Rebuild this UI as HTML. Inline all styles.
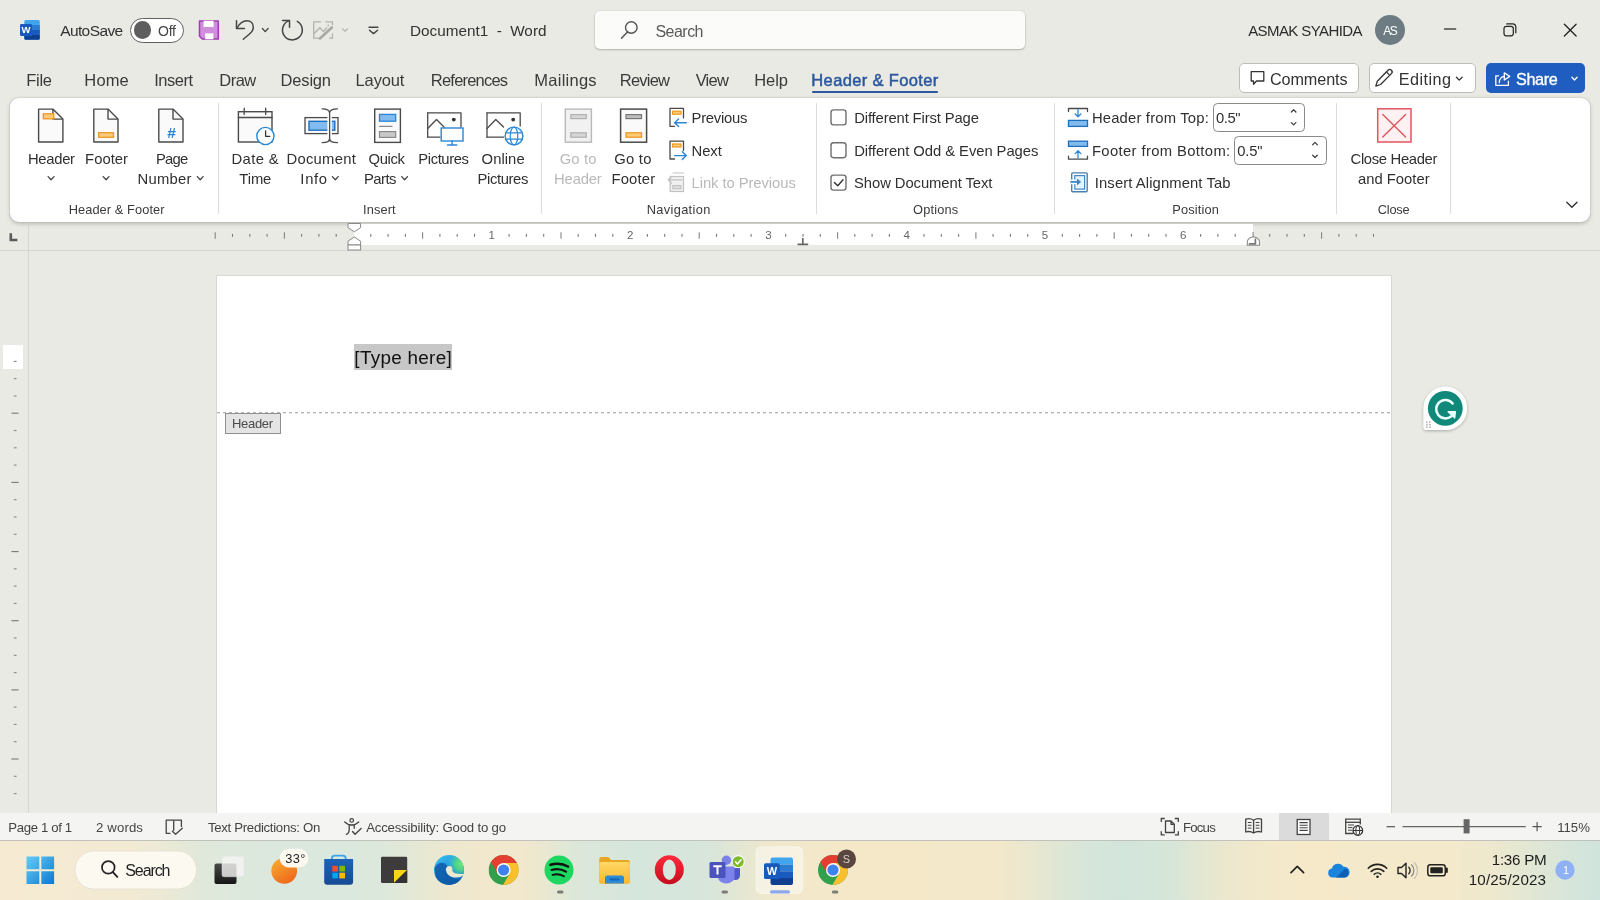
<!DOCTYPE html>
<html><head><meta charset="utf-8"><title>Document1 - Word</title>
<style>
html,body{margin:0;padding:0;}
body{width:1600px;height:900px;overflow:hidden;background:#EAEAE4;font-family:"Liberation Sans",sans-serif;position:relative;}
#root{position:absolute;left:0;top:0;width:1600px;height:900px;will-change:transform;}
.a{position:absolute;box-sizing:border-box;}
.t{position:absolute;white-space:pre;line-height:20px;}
svg{overflow:visible;}
</style></head><body><div id="root">
<svg class="a" style="left:20px;top:20px;" width="21" height="20" viewBox="0 0 21 20">
<rect x="4.300" y="0" width="15.500" height="19.800" rx="1.500" fill="#41A5EE"/>
<rect x="4.300" y="5" width="15.500" height="5" fill="#2B7CD3"/>
<rect x="4.300" y="10" width="15.500" height="5" fill="#185ABD"/>
<path d="M4.300 15h15.500v3.300a1.500 1.500 0 0 1-1.500 1.500h-12.500a1.500 1.500 0 0 1-1.500-1.500z" fill="#103F91"/>
<rect x="0" y="4" width="12" height="12" rx="1.200" fill="#185ABD"/>
<text x="6" y="13.400" font-family="Liberation Sans,sans-serif" font-weight="bold" font-size="9.500" fill="#fff" text-anchor="middle">W</text>
</svg>
<span class="t" style="left:60.17px;top:21.00px;font-size:15.5px;letter-spacing:-0.600px;color:#333;">AutoSave</span>
<div class="a" style="left:130.2px;top:17.5px;width:53.60000000000002px;height:25.4px;background:#fff;border:1.4px solid #606060;border-radius:14px;"></div>
<div class="a" style="left:133.6px;top:21px;width:17.599999999999994px;height:17.6px;background:#5e5e5e;border-radius:50%;"></div>
<span class="t" style="left:158.04px;top:21.00px;font-size:14px;letter-spacing:-0.247px;color:#444;">Off</span>
<svg class="a" style="left:0px;top:0px;" width="400" height="60" viewBox="0 0 400 60">
<path d="M199.500 21H218.300V39H202.300L199.500 36.200Z" fill="#D08EDD" stroke="#9E3DB2" stroke-width="1.500" stroke-linejoin="round"/>
<rect x="203.600" y="20.800" width="10" height="6.200" fill="#fff"/>
<rect x="205.200" y="33.400" width="8.200" height="5.800" fill="#fff"/>
<path d="M236.500 20.800V28.600H244.400" fill="none" stroke="#444" stroke-width="1.500" stroke-linecap="round" stroke-linejoin="round"/>
<path d="M236.800 28.300C239.500 23.500 243 20.800 246.900 20.800C250.800 20.800 253.300 23.500 253.300 27.300C253.300 30 252 32 249.500 34L243.300 39.200" fill="none" stroke="#444" stroke-width="1.500" stroke-linecap="round" stroke-linejoin="round"/>
<path d="M282.500 20.500H289.500V27.300" fill="none" stroke="#444" stroke-width="1.500" stroke-linecap="round" stroke-linejoin="round"/>
<path d="M297.300 21.400A9.900 9.900 0 1 1 289.300 20.600" fill="none" stroke="#444" stroke-width="1.500" stroke-linecap="round"/>
<path d="M321 21.800H313.700V38.200H321M325.500 21.800H332.500V25M332.500 33.500V38.200H329" fill="none" stroke="#b3b3ad" stroke-width="1.300"/>
<path d="M314 33.800L319.800 27.800L323.500 31.500L327 27.500" fill="none" stroke="#b3b3ad" stroke-width="1.300"/>
<circle cx="328.300" cy="25.300" r="0.900" fill="#b3b3ad"/>
<path d="M331.800 27.500L320 38.500" stroke="#a9a9a3" stroke-width="2.600" stroke-linecap="round"/>
<path d="M369 27.300H377.900" stroke="#444" stroke-width="1.400" stroke-linecap="round"/>
<path d="M369.500 30.200L373.500 33.600L377.600 30.200" fill="none" stroke="#444" stroke-width="1.400" stroke-linecap="round" stroke-linejoin="round"/>
</svg>
<svg class="a" style="left:0;top:0" width="1600" height="900"><path d="M262.4 28.5 L265.25 31.6 L268.1 28.5" fill="none" stroke="#444" stroke-width="1.3" stroke-linecap="round" stroke-linejoin="round"/></svg>
<svg class="a" style="left:0;top:0" width="1600" height="900"><path d="M342.4 28.8 L345.0 31.3 L347.6 28.8" fill="none" stroke="#b8b8b2" stroke-width="1.2" stroke-linecap="round" stroke-linejoin="round"/></svg>
<span class="t" style="left:409.95px;top:21.00px;font-size:15.3px;letter-spacing:-0.003px;color:#333;">Document1  -  Word</span>
<div class="a" style="left:595px;top:11px;width:430px;height:38px;background:#FBFBFA;border-radius:5px;box-shadow:0 1px 2px rgba(0,0,0,0.22),0 0 0 1px rgba(0,0,0,0.04);"></div>
<svg class="a" style="left:620px;top:20px;" width="20" height="20" viewBox="0 0 20 20">
<circle cx="11.300" cy="7.500" r="5.800" fill="none" stroke="#555" stroke-width="1.4"/>
<path d="M7.500 12l-6 6.300" stroke="#555" stroke-width="1.5" stroke-linecap="round"/>
</svg>
<span class="t" style="left:655.48px;top:22.00px;font-size:16px;letter-spacing:-0.531px;color:#5a5a5a;">Search</span>
<span class="t" style="left:1248.17px;top:21.00px;font-size:15px;letter-spacing:-0.588px;color:#2b2b2b;">ASMAK SYAHIDA</span>
<div class="a" style="left:1375px;top:15px;width:30px;height:30px;background:#6C7C82;border-radius:50%;"></div>
<span class="t" style="left:1383.28px;top:21.00px;font-size:12px;letter-spacing:-1.552px;color:#fff;">AS</span>
<svg class="a" style="left:1440px;top:18px;" width="145" height="24" viewBox="0 0 145 24">
<path d="M4 11h12.200" stroke="#222" stroke-width="1.200"/>
<rect x="64" y="8.300" width="9.300" height="9.500" rx="2.200" fill="none" stroke="#222" stroke-width="1.200"/>
<path d="M66.300 5.800h6.300a3.200 3.200 0 0 1 3.200 3.200v6.300" fill="none" stroke="#222" stroke-width="1.200"/>
<path d="M124.400 6.300l11.700 11.700M136.100 6.300l-11.700 11.700" stroke="#222" stroke-width="1.300" stroke-linecap="round"/>
</svg>
<span class="t" style="left:26.35px;top:70.00px;font-size:16.5px;letter-spacing:-0.321px;color:#3a3a3a;">File</span>
<span class="t" style="left:84.35px;top:70.00px;font-size:16.5px;letter-spacing:0.122px;color:#3a3a3a;">Home</span>
<span class="t" style="left:154.18px;top:70.00px;font-size:16.5px;letter-spacing:-0.470px;color:#3a3a3a;">Insert</span>
<span class="t" style="left:219.35px;top:70.00px;font-size:16.5px;letter-spacing:-0.553px;color:#3a3a3a;">Draw</span>
<span class="t" style="left:280.60px;top:70.00px;font-size:16.5px;letter-spacing:-0.183px;color:#3a3a3a;">Design</span>
<span class="t" style="left:355.60px;top:70.00px;font-size:16.5px;letter-spacing:-0.156px;color:#3a3a3a;">Layout</span>
<span class="t" style="left:430.85px;top:70.00px;font-size:16.5px;letter-spacing:-0.794px;color:#3a3a3a;">References</span>
<span class="t" style="left:534.35px;top:70.00px;font-size:16.5px;letter-spacing:0.245px;color:#3a3a3a;">Mailings</span>
<span class="t" style="left:619.85px;top:70.00px;font-size:16.5px;letter-spacing:-0.801px;color:#3a3a3a;">Review</span>
<span class="t" style="left:695.63px;top:70.00px;font-size:16.5px;letter-spacing:-0.716px;color:#3a3a3a;">View</span>
<span class="t" style="left:754.35px;top:70.00px;font-size:16.5px;letter-spacing:-0.135px;color:#3a3a3a;">Help</span>
<span class="t" style="left:811.35px;top:70.00px;font-size:16.5px;letter-spacing:0.352px;color:#2A579E;-webkit-text-stroke:0.5px #2A579E;">Header &amp; Footer</span>
<div class="a" style="left:812px;top:91.1px;width:126px;height:2.1000000000000085px;background:#2A579E;border-radius:1px;"></div>
<div class="a" style="left:1239px;top:63.2px;width:119.5px;height:29.799999999999997px;background:#fff;border:1px solid #bcbcb8;border-radius:5px;"></div>
<svg class="a" style="left:1250px;top:70px;" width="16" height="16" viewBox="0 0 16 16"><path d="M1.200 1.700h12.600v9.300h-7.300l-3 3.300v-3.300h-2.300z" fill="none" stroke="#333" stroke-width="1.300" stroke-linejoin="round"/></svg>
<span class="t" style="left:1269.89px;top:69.00px;font-size:16.2px;letter-spacing:-0.082px;color:#333;">Comments</span>
<div class="a" style="left:1369px;top:63.2px;width:106.5px;height:29.799999999999997px;background:#fff;border:1px solid #bcbcb8;border-radius:5px;"></div>
<svg class="a" style="left:1374px;top:68px;" width="20" height="20" viewBox="0 0 20 20"><path d="M14 2.200a2.300 2.300 0 0 1 3.400 3.400l-10.800 10.900l-4.800 1.600l1.500-4.900z" fill="none" stroke="#333" stroke-width="1.300" stroke-linejoin="round"/><path d="M12.500 4l3.300 3.300" stroke="#333" stroke-width="1.200"/></svg>
<span class="t" style="left:1398.87px;top:69.00px;font-size:16.2px;letter-spacing:0.445px;color:#333;">Editing</span>
<svg class="a" style="left:0;top:0" width="1600" height="900"><path d="M1456.4 77.2 L1459.25 80.1 L1462.1 77.2" fill="none" stroke="#333" stroke-width="1.3" stroke-linecap="round" stroke-linejoin="round"/></svg>
<div class="a" style="left:1486px;top:63.2px;width:99px;height:29.799999999999997px;background:#1F5EC0;border-radius:5px;"></div>
<svg class="a" style="left:0px;top:0px;" width="1600" height="100" viewBox="0 0 1600 100">
<path d="M1498.600 75.800H1495.800V85.300H1508.400V81.200" fill="none" stroke="#fff" stroke-width="1.300" stroke-linejoin="round" stroke-linecap="round"/>
<path d="M1499.200 82.600C1499.600 78.600 1501.400 76.500 1504.300 76.300" fill="none" stroke="#fff" stroke-width="1.300" stroke-linecap="round"/>
<path d="M1504.300 72.800L1509.700 76.400L1504.300 80Z" fill="none" stroke="#fff" stroke-width="1.300" stroke-linejoin="round"/>
</svg>
<span class="t" style="left:1515.97px;top:69.00px;font-size:16.2px;letter-spacing:-0.365px;color:#fff;-webkit-text-stroke:0.35px #fff;">Share</span>
<svg class="a" style="left:0;top:0" width="1600" height="900"><path d="M1571.9 77.2 L1574.5 80.0 L1577.1 77.2" fill="none" stroke="#fff" stroke-width="1.3" stroke-linecap="round" stroke-linejoin="round"/></svg>
<div class="a" style="left:10px;top:97.5px;width:1580px;height:124.0px;background:#fff;border-radius:9px;box-shadow:0 1.5px 4px rgba(0,0,0,0.20),0 0 2px rgba(0,0,0,0.14);"></div>
<div class="a" style="left:218.0px;top:102.5px;width:1.0px;height:111.19999999999999px;background:#dcdcdc;"></div>
<div class="a" style="left:541.3px;top:102.5px;width:1.0px;height:111.19999999999999px;background:#dcdcdc;"></div>
<div class="a" style="left:815.7px;top:102.5px;width:1.0px;height:111.19999999999999px;background:#dcdcdc;"></div>
<div class="a" style="left:1053.7px;top:102.5px;width:1.0px;height:111.19999999999999px;background:#dcdcdc;"></div>
<div class="a" style="left:1336.2px;top:102.5px;width:1.0px;height:111.19999999999999px;background:#dcdcdc;"></div>
<div class="a" style="left:1450.0px;top:102.5px;width:1.0px;height:111.19999999999999px;background:#dcdcdc;"></div>
<span class="t" style="left:27.99px;top:149.00px;font-size:14.8px;letter-spacing:-0.306px;color:#303030;">Header</span>
<svg class="a" style="left:0;top:0" width="1600" height="900"><path d="M48.15 176.6 L51.075 179.8 L54.0 176.6" fill="none" stroke="#444" stroke-width="1.3" stroke-linecap="round" stroke-linejoin="round"/></svg>
<span class="t" style="left:85.09px;top:149.00px;font-size:14.8px;letter-spacing:0.027px;color:#303030;">Footer</span>
<svg class="a" style="left:0;top:0" width="1600" height="900"><path d="M103.15 176.6 L106.075 179.8 L109.0 176.6" fill="none" stroke="#444" stroke-width="1.3" stroke-linecap="round" stroke-linejoin="round"/></svg>
<span class="t" style="left:155.99px;top:149.00px;font-size:14.8px;letter-spacing:-0.798px;color:#303030;">Page</span>
<span class="t" style="left:137.59px;top:169.00px;font-size:14.8px;letter-spacing:0.252px;color:#303030;">Number</span>
<svg class="a" style="left:0;top:0" width="1600" height="900"><path d="M197.3 176.6 L200.2 179.8 L203.1 176.6" fill="none" stroke="#444" stroke-width="1.3" stroke-linecap="round" stroke-linejoin="round"/></svg>
<span class="t" style="left:68.65px;top:200.00px;font-size:12.8px;letter-spacing:0.096px;color:#3a3a3a;">Header &amp; Footer</span>
<span class="t" style="left:231.49px;top:149.00px;font-size:14.8px;letter-spacing:0.377px;color:#303030;">Date &amp;</span>
<span class="t" style="left:239.37px;top:169.00px;font-size:14.8px;letter-spacing:-0.122px;color:#303030;">Time</span>
<span class="t" style="left:286.49px;top:149.00px;font-size:14.8px;letter-spacing:0.266px;color:#303030;">Document</span>
<span class="t" style="left:300.34px;top:169.00px;font-size:14.8px;letter-spacing:0.694px;color:#303030;">Info</span>
<svg class="a" style="left:0;top:0" width="1600" height="900"><path d="M332.4 176.6 L335.3 179.8 L338.20000000000005 176.6" fill="none" stroke="#444" stroke-width="1.3" stroke-linecap="round" stroke-linejoin="round"/></svg>
<span class="t" style="left:368.50px;top:149.00px;font-size:14.8px;letter-spacing:-0.341px;color:#303030;">Quick</span>
<span class="t" style="left:363.99px;top:169.00px;font-size:14.8px;letter-spacing:-0.500px;color:#303030;">Parts</span>
<svg class="a" style="left:0;top:0" width="1600" height="900"><path d="M401.7 176.6 L404.6 179.8 L407.5 176.6" fill="none" stroke="#444" stroke-width="1.3" stroke-linecap="round" stroke-linejoin="round"/></svg>
<span class="t" style="left:418.29px;top:149.00px;font-size:14.8px;letter-spacing:-0.401px;color:#303030;">Pictures</span>
<span class="t" style="left:481.60px;top:149.00px;font-size:14.8px;letter-spacing:0.054px;color:#303030;">Online</span>
<span class="t" style="left:477.49px;top:169.00px;font-size:14.8px;letter-spacing:-0.372px;color:#303030;">Pictures</span>
<span class="t" style="left:363.02px;top:200.00px;font-size:12.8px;letter-spacing:0.110px;color:#3a3a3a;">Insert</span>
<span class="t" style="left:559.66px;top:149.00px;font-size:14.8px;letter-spacing:0.136px;color:#b9b9b9;">Go to</span>
<span class="t" style="left:554.09px;top:169.00px;font-size:14.8px;letter-spacing:-0.176px;color:#b9b9b9;">Header</span>
<span class="t" style="left:614.36px;top:149.00px;font-size:14.8px;letter-spacing:0.211px;color:#303030;">Go to</span>
<span class="t" style="left:611.49px;top:169.00px;font-size:14.8px;letter-spacing:0.177px;color:#303030;">Footer</span>
<span class="t" style="left:691.49px;top:108.00px;font-size:14.8px;letter-spacing:-0.219px;color:#303030;">Previous</span>
<span class="t" style="left:691.49px;top:141.00px;font-size:14.8px;letter-spacing:-0.041px;color:#303030;">Next</span>
<span class="t" style="left:691.49px;top:173.00px;font-size:14.8px;letter-spacing:-0.062px;color:#b9b9b9;">Link to Previous</span>
<span class="t" style="left:646.65px;top:200.00px;font-size:12.8px;letter-spacing:0.356px;color:#3a3a3a;">Navigation</span>
<span class="t" style="left:854.19px;top:108.00px;font-size:14.8px;letter-spacing:-0.133px;color:#303030;">Different First Page</span>
<span class="t" style="left:854.19px;top:141.00px;font-size:14.8px;letter-spacing:-0.059px;color:#303030;">Different Odd &amp; Even Pages</span>
<span class="t" style="left:854.03px;top:173.00px;font-size:14.8px;letter-spacing:-0.064px;color:#303030;">Show Document Text</span>
<span class="t" style="left:913.10px;top:200.00px;font-size:12.8px;letter-spacing:0.159px;color:#3a3a3a;">Options</span>
<span class="t" style="left:1091.89px;top:108.00px;font-size:14.8px;letter-spacing:0.193px;color:#303030;">Header from Top:</span>
<div class="a" style="left:1212.6px;top:103px;width:92.60000000000014px;height:29.19999999999999px;background:#fff;border:1.1px solid #8a8a8a;border-radius:4.5px;"></div>
<span class="t" style="left:1215.92px;top:108.00px;font-size:14.8px;letter-spacing:-0.377px;color:#303030;">0.5&quot;</span>
<span class="t" style="left:1091.89px;top:141.00px;font-size:14.8px;letter-spacing:0.377px;color:#303030;">Footer from Bottom:</span>
<div class="a" style="left:1234.3px;top:135.6px;width:92.70000000000005px;height:29.0px;background:#fff;border:1.1px solid #8a8a8a;border-radius:4.5px;"></div>
<span class="t" style="left:1237.32px;top:141.00px;font-size:14.8px;letter-spacing:-0.177px;color:#303030;">0.5&quot;</span>
<span class="t" style="left:1094.84px;top:173.00px;font-size:14.8px;letter-spacing:0.103px;color:#303030;">Insert Alignment Tab</span>
<span class="t" style="left:1172.35px;top:200.00px;font-size:12.8px;letter-spacing:0.134px;color:#3a3a3a;">Position</span>
<span class="t" style="left:1350.56px;top:149.00px;font-size:14.8px;letter-spacing:-0.328px;color:#303030;">Close Header</span>
<span class="t" style="left:1357.98px;top:169.00px;font-size:14.8px;letter-spacing:0.009px;color:#303030;">and Footer</span>
<span class="t" style="left:1377.76px;top:200.00px;font-size:12.8px;letter-spacing:-0.228px;color:#3a3a3a;">Close</span>
<svg class="a" style="left:0;top:0" width="1600" height="900"><path d="M1566.8000000000002 202.2 L1571.9 207.20000000000002 L1577.0 202.2" fill="none" stroke="#333" stroke-width="1.4" stroke-linecap="round" stroke-linejoin="round"/></svg>
<svg class="a" style="left:0;top:0" width="1600" height="900"><path d="M38.6 109.1H52.9L62.9 119.1V142H38.6Z" fill="#FAFAFA" stroke="#4a4a4a" stroke-width="1.4" stroke-linejoin="round"/><path d="M52.9 109.1V119.1H62.9" fill="none" stroke="#4a4a4a" stroke-width="1.4" stroke-linejoin="round"/><rect x="43.3" y="113.8" width="10.50" height="5.00" rx="0" fill="#F9CB7A" stroke="#EE9A1E" stroke-width="1.3"/><path d="M93.8 109.1H108L118 119.1V142H93.8Z" fill="#FAFAFA" stroke="#4a4a4a" stroke-width="1.4" stroke-linejoin="round"/><path d="M108 109.1V119.1H118" fill="none" stroke="#4a4a4a" stroke-width="1.4" stroke-linejoin="round"/><rect x="98.6" y="132.7" width="14.90" height="4.60" rx="0" fill="#F9CB7A" stroke="#EE9A1E" stroke-width="1.3"/><path d="M158.8 109.1H173L183 119.1V142H158.8Z" fill="#FAFAFA" stroke="#4a4a4a" stroke-width="1.4" stroke-linejoin="round"/><path d="M173 109.1V119.1H183" fill="none" stroke="#4a4a4a" stroke-width="1.4" stroke-linejoin="round"/><text x="171.6" y="138" font-family="Liberation Sans,sans-serif" font-size="15.5" font-weight="bold" fill="#2B86D6" text-anchor="middle">#</text><rect x="238.4" y="111.7" width="33.60" height="30.30" rx="0" fill="#FAFAFA" stroke="#4a4a4a" stroke-width="1.4"/><path d="M238.4 117.5H272" fill="none" stroke="#4a4a4a" stroke-width="1.3" stroke-linecap="round" stroke-linejoin="round" /><path d="M244.2 108.2V114.4M265.7 108.2V114.4" fill="none" stroke="#4a4a4a" stroke-width="1.3" stroke-linecap="round" stroke-linejoin="round" /><circle cx="265.4" cy="136" r="8.6" fill="#fff" stroke="#2B86D6" stroke-width="1.4"/><path d="M265.6 131V136.3H269.8" fill="none" stroke="#333" stroke-width="1.3" stroke-linecap="round" stroke-linejoin="round" /><rect x="305" y="117.6" width="33.00" height="16.00" rx="0" fill="#FAFAFA" stroke="#4a4a4a" stroke-width="1.3"/><rect x="309" y="121.3" width="25.80" height="8.90" rx="0" fill="#82BBEE" stroke="#1F6FBF" stroke-width="1.4"/><path d="M329.6 112V139.500" fill="none" stroke="#fff" stroke-width="4.4" stroke-linecap="round" stroke-linejoin="round" /><path d="M322.2 108.8C326.5 108.8 329.6 109.5 329.6 113V138.5C329.6 142 326.5 142.7 322.2 142.7M337.4 108.8C333 108.8 329.6 109.5 329.6 113M329.6 138.5C329.6 142 333 142.7 337.4 142.7" fill="none" stroke="#4a4a4a" stroke-width="1.3" stroke-linecap="round" stroke-linejoin="round" /><rect x="374.7" y="109.1" width="25.70" height="33.30" rx="0" fill="#FAFAFA" stroke="#4a4a4a" stroke-width="1.4"/><rect x="379.5" y="114.4" width="16.20" height="6.80" rx="0" fill="#82BBEE" stroke="#2B86D6" stroke-width="1.3"/><path d="M379.5 126.3H392" fill="none" stroke="#8a8a8a" stroke-width="1.2" stroke-linecap="round" stroke-linejoin="round" /><rect x="379.5" y="131.6" width="16.20" height="5.80" rx="0" fill="#c8c8c8" stroke="#8a8a8a" stroke-width="1.2"/><path d="M427.7 112.9H461V127M440 137.2H427.7Z" fill="none" stroke="#4a4a4a" stroke-width="1.3" stroke-linecap="round" stroke-linejoin="round" /><path d="M427.7 112.9V137.2" fill="none" stroke="#4a4a4a" stroke-width="1.3" stroke-linecap="round" stroke-linejoin="round" /><path d="M427.7 128.5L436.5 119.5L444 127" fill="none" stroke="#4a4a4a" stroke-width="1.3" stroke-linecap="round" stroke-linejoin="round" /><circle cx="453.8" cy="119.6" r="1.9" fill="#333"/><rect x="441.2" y="128" width="21.80" height="13.00" rx="0" fill="#fff" stroke="#2B86D6" stroke-width="1.4"/><path d="M452.1 141V144.6M447.5 145H456.8" fill="none" stroke="#2B86D6" stroke-width="1.4" stroke-linecap="round" stroke-linejoin="round" /><path d="M487 112.9H520.2V126M503.5 137.2H487" fill="none" stroke="#4a4a4a" stroke-width="1.3" stroke-linecap="round" stroke-linejoin="round" /><path d="M487 112.9V137.2" fill="none" stroke="#4a4a4a" stroke-width="1.3" stroke-linecap="round" stroke-linejoin="round" /><path d="M487 128.5L495.8 119.5L503.5 127" fill="none" stroke="#4a4a4a" stroke-width="1.3" stroke-linecap="round" stroke-linejoin="round" /><circle cx="513.2" cy="119.6" r="1.9" fill="#333"/><circle cx="514" cy="136" r="8.9" fill="#fff" stroke="#2B86D6" stroke-width="1.4"/><ellipse cx="514" cy="136" rx="3.8" ry="8.9" fill="none" stroke="#2B86D6" stroke-width="1.2"/><path d="M505.8 132.8H522.2M505.8 139.2H522.2" fill="none" stroke="#2B86D6" stroke-width="1.2" stroke-linecap="round" stroke-linejoin="round" /><rect x="565.3" y="109.1" width="26.10" height="33.10" rx="0" fill="#F1F1F1" stroke="#b9b9b9" stroke-width="1.4"/><rect x="570.8" y="114.6" width="15.50" height="4.00" rx="0" fill="#d6d6d6" stroke="#b0b0b0" stroke-width="1.2"/><rect x="570.8" y="132.8" width="15.50" height="4.40" rx="0" fill="#d6d6d6" stroke="#b0b0b0" stroke-width="1.2"/><rect x="620.6" y="109.1" width="26.00" height="33.10" rx="0" fill="#FAFAFA" stroke="#4a4a4a" stroke-width="1.5"/><rect x="626" y="114.6" width="15.50" height="4.00" rx="0" fill="#bdbdbd" stroke="#777" stroke-width="1.2"/><rect x="626" y="132.8" width="15.50" height="4.40" rx="0" fill="#F9CB7A" stroke="#EE9A1E" stroke-width="1.3"/><path d="M674.5 126.3H670V108.4H683.5V118" fill="none" stroke="#4a4a4a" stroke-width="1.3" stroke-linecap="round" stroke-linejoin="round" /><rect x="672.6" y="111.2" width="8.40" height="3.00" rx="0" fill="#F9CB7A" stroke="#EE9A1E" stroke-width="1.2"/><path d="M686.3 122.7H675M678.6 118.9L674.6 122.7L678.6 126.5" fill="none" stroke="#2B86D6" stroke-width="1.4" stroke-linecap="round" stroke-linejoin="round" /><path d="M674.5 159H670V141.2H683.5V150.5" fill="none" stroke="#4a4a4a" stroke-width="1.3" stroke-linecap="round" stroke-linejoin="round" /><rect x="672.6" y="144" width="8.40" height="3.00" rx="0" fill="#F9CB7A" stroke="#EE9A1E" stroke-width="1.2"/><path d="M674.5 155.6H686M682.3 151.8L686.3 155.6L682.3 159.4" fill="none" stroke="#2B86D6" stroke-width="1.4" stroke-linecap="round" stroke-linejoin="round" /><rect x="670.2" y="176.5" width="13.30" height="15.00" rx="0" fill="#F1F1F1" stroke="#c2c2c2" stroke-width="1.2"/><rect x="672.8" y="185.5" width="8.20" height="3.30" rx="0" fill="#dcdcdc" stroke="#c2c2c2" stroke-width="1.1"/><path d="M682 179.8H669M671.6 176.5L668.2 179.8L671.6 183.1" fill="none" stroke="#c2c2c2" stroke-width="1.3" stroke-linecap="round" stroke-linejoin="round" /><path d="M673 173H683.5" fill="none" stroke="#c2c2c2" stroke-width="1.2" stroke-linecap="round" stroke-linejoin="round" /><rect x="831" y="109.9" width="15.00" height="15.00" rx="2.6" fill="#fff" stroke="#6e6e6e" stroke-width="1.4"/><rect x="831" y="142.7" width="15.00" height="15.00" rx="2.6" fill="#fff" stroke="#6e6e6e" stroke-width="1.4"/><rect x="831" y="175.1" width="15.00" height="15.00" rx="2.6" fill="#fff" stroke="#6e6e6e" stroke-width="1.4"/><path d="M834.4 182.4L837.8 185.7L843 179.7" fill="none" stroke="#333" stroke-width="1.4" stroke-linecap="round" stroke-linejoin="round" /><path d="M1068.5 111.5V108.5H1087.5V111.5" fill="none" stroke="#4a4a4a" stroke-width="1.3" stroke-linecap="round" stroke-linejoin="round" /><path d="M1078 109.5V116.5M1075.2 114L1078 116.8L1080.8 114" fill="none" stroke="#2B86D6" stroke-width="1.3" stroke-linecap="round" stroke-linejoin="round" /><rect x="1068.5" y="120.4" width="19.00" height="6.00" rx="0" fill="#82BBEE" stroke="#1F6FBF" stroke-width="1.3"/><path d="M1291.3 112L1293.6 109.7L1295.9 112M1291.3 122.6L1293.6 124.9L1295.9 122.6" fill="none" stroke="#444" stroke-width="1.3" stroke-linecap="round" stroke-linejoin="round" /><rect x="1068.5" y="141.2" width="19.00" height="5.20" rx="0" fill="#82BBEE" stroke="#1F6FBF" stroke-width="1.3"/><path d="M1068.5 156.2V159.2H1087.5V156.2" fill="none" stroke="#4a4a4a" stroke-width="1.3" stroke-linecap="round" stroke-linejoin="round" /><path d="M1078 158V151M1075.2 153.6L1078 150.8L1080.8 153.6" fill="none" stroke="#2B86D6" stroke-width="1.3" stroke-linecap="round" stroke-linejoin="round" /><path d="M1312.7 144.700L1315 142.400L1317.300 144.700M1312.7 155.200L1315 157.500L1317.300 155.200" fill="none" stroke="#444" stroke-width="1.3" stroke-linecap="round" stroke-linejoin="round" /><rect x="1071.7" y="172.9" width="15.50" height="18.90" rx="1" fill="#fff" stroke="#4d7fb0" stroke-width="1.4"/><rect x="1074.8" y="175.6" width="9.80" height="13.50" rx="0" fill="#E3F4FB" stroke="#3f88c4" stroke-width="1.2"/><rect x="1070.5" y="179.6" width="5.4" height="4.6" fill="#fff"/><path d="M1071 181.9H1078" fill="none" stroke="#3a86c2" stroke-width="1.7" stroke-linecap="round" stroke-linejoin="round" /><path d="M1077 178.500L1081.200 181.900L1077 185.300Z" fill="#3a86c2"/><rect x="1377.7" y="108.8" width="33.30" height="33.20" rx="0" fill="#FDF1F1" stroke="#E0565F" stroke-width="1.5"/><path d="M1382.8 114.500L1405.600 137M1405.600 114.500L1382.800 137" fill="none" stroke="#E0565F" stroke-width="1.4" stroke-linecap="round" stroke-linejoin="round" /></svg>
<div class="a" style="left:0px;top:250px;width:1600px;height:1px;background:#d5d5d0;"></div>
<div class="a" style="left:28px;top:223px;width:1px;height:590px;background:#d5d5d0;"></div>
<div class="a" style="left:354px;top:224px;width:898.5px;height:20.5px;background:#fff;"></div>
<div class="a" style="left:3px;top:345.2px;width:20.3px;height:23.400000000000034px;background:#fff;"></div>
<svg class="a" style="left:0;top:0" width="1600" height="900"><path d="M215.2 232.3V238.8" stroke="#858585" stroke-width="1.1"/><path d="M232.5 233.9V236.8" stroke="#777" stroke-width="1.1"/><path d="M249.8 233.9V236.8" stroke="#777" stroke-width="1.1"/><path d="M267.1 233.9V236.8" stroke="#777" stroke-width="1.1"/><path d="M284.4 232.3V238.8" stroke="#858585" stroke-width="1.1"/><path d="M301.6 233.9V236.8" stroke="#777" stroke-width="1.1"/><path d="M318.9 233.9V236.8" stroke="#777" stroke-width="1.1"/><path d="M336.2 233.9V236.8" stroke="#777" stroke-width="1.1"/><path d="M370.8 233.9V236.8" stroke="#777" stroke-width="1.1"/><path d="M388.1 233.9V236.8" stroke="#777" stroke-width="1.1"/><path d="M405.4 233.9V236.8" stroke="#777" stroke-width="1.1"/><path d="M422.6 232.3V238.8" stroke="#858585" stroke-width="1.1"/><path d="M439.9 233.9V236.8" stroke="#777" stroke-width="1.1"/><path d="M457.2 233.9V236.8" stroke="#777" stroke-width="1.1"/><path d="M474.5 233.9V236.8" stroke="#777" stroke-width="1.1"/><text x="491.8" y="239.4" font-family="Liberation Sans,sans-serif" font-size="11.5" fill="#666" text-anchor="middle">1</text><path d="M509.1 233.9V236.8" stroke="#777" stroke-width="1.1"/><path d="M526.4 233.9V236.8" stroke="#777" stroke-width="1.1"/><path d="M543.7 233.9V236.8" stroke="#777" stroke-width="1.1"/><path d="M561.0 232.3V238.8" stroke="#858585" stroke-width="1.1"/><path d="M578.2 233.9V236.8" stroke="#777" stroke-width="1.1"/><path d="M595.5 233.9V236.8" stroke="#777" stroke-width="1.1"/><path d="M612.8 233.9V236.8" stroke="#777" stroke-width="1.1"/><text x="630.1" y="239.4" font-family="Liberation Sans,sans-serif" font-size="11.5" fill="#666" text-anchor="middle">2</text><path d="M647.4 233.9V236.8" stroke="#777" stroke-width="1.1"/><path d="M664.7 233.9V236.8" stroke="#777" stroke-width="1.1"/><path d="M682.0 233.9V236.8" stroke="#777" stroke-width="1.1"/><path d="M699.2 232.3V238.8" stroke="#858585" stroke-width="1.1"/><path d="M716.5 233.9V236.8" stroke="#777" stroke-width="1.1"/><path d="M733.8 233.9V236.8" stroke="#777" stroke-width="1.1"/><path d="M751.1 233.9V236.8" stroke="#777" stroke-width="1.1"/><text x="768.4" y="239.4" font-family="Liberation Sans,sans-serif" font-size="11.5" fill="#666" text-anchor="middle">3</text><path d="M785.7 233.9V236.8" stroke="#777" stroke-width="1.1"/><path d="M803.0 233.9V236.8" stroke="#777" stroke-width="1.1"/><path d="M820.3 233.9V236.8" stroke="#777" stroke-width="1.1"/><path d="M837.6 232.3V238.8" stroke="#858585" stroke-width="1.1"/><path d="M854.8 233.9V236.8" stroke="#777" stroke-width="1.1"/><path d="M872.1 233.9V236.8" stroke="#777" stroke-width="1.1"/><path d="M889.4 233.9V236.8" stroke="#777" stroke-width="1.1"/><text x="906.7" y="239.4" font-family="Liberation Sans,sans-serif" font-size="11.5" fill="#666" text-anchor="middle">4</text><path d="M924.0 233.9V236.8" stroke="#777" stroke-width="1.1"/><path d="M941.3 233.9V236.8" stroke="#777" stroke-width="1.1"/><path d="M958.6 233.9V236.8" stroke="#777" stroke-width="1.1"/><path d="M975.9 232.3V238.8" stroke="#858585" stroke-width="1.1"/><path d="M993.1 233.9V236.8" stroke="#777" stroke-width="1.1"/><path d="M1010.4 233.9V236.8" stroke="#777" stroke-width="1.1"/><path d="M1027.7 233.9V236.8" stroke="#777" stroke-width="1.1"/><text x="1045.0" y="239.4" font-family="Liberation Sans,sans-serif" font-size="11.5" fill="#666" text-anchor="middle">5</text><path d="M1062.3 233.9V236.8" stroke="#777" stroke-width="1.1"/><path d="M1079.6 233.9V236.8" stroke="#777" stroke-width="1.1"/><path d="M1096.9 233.9V236.8" stroke="#777" stroke-width="1.1"/><path d="M1114.2 232.3V238.8" stroke="#858585" stroke-width="1.1"/><path d="M1131.4 233.9V236.8" stroke="#777" stroke-width="1.1"/><path d="M1148.7 233.9V236.8" stroke="#777" stroke-width="1.1"/><path d="M1166.0 233.9V236.8" stroke="#777" stroke-width="1.1"/><text x="1183.3" y="239.4" font-family="Liberation Sans,sans-serif" font-size="11.5" fill="#666" text-anchor="middle">6</text><path d="M1200.6 233.9V236.8" stroke="#777" stroke-width="1.1"/><path d="M1217.9 233.9V236.8" stroke="#777" stroke-width="1.1"/><path d="M1235.2 233.9V236.8" stroke="#777" stroke-width="1.1"/><path d="M1269.7 233.9V236.8" stroke="#777" stroke-width="1.1"/><path d="M1287.0 233.9V236.8" stroke="#777" stroke-width="1.1"/><path d="M1304.3 233.9V236.8" stroke="#777" stroke-width="1.1"/><path d="M1321.6 232.3V238.8" stroke="#858585" stroke-width="1.1"/><path d="M1338.9 233.9V236.8" stroke="#777" stroke-width="1.1"/><path d="M1356.2 233.9V236.8" stroke="#777" stroke-width="1.1"/><path d="M1373.5 233.9V236.8" stroke="#777" stroke-width="1.1"/><path d="M10.8 233.2V240H17.4" fill="none" stroke="#5a5a5a" stroke-width="2.6"/><path d="M348 223.5H360.6V227.6L354.3 231.8L348 227.6Z" fill="#fff" stroke="#8a8a8a" stroke-width="1"/><path d="M348 245V241.2L354.3 237L360.6 241.2V245Z" fill="#fff" stroke="#8a8a8a" stroke-width="1"/><rect x="348" y="245" width="12.6" height="5" fill="#fff" stroke="#8a8a8a" stroke-width="1"/><path d="M802.8 238V244M797.5 244.3H808.2" stroke="#666" stroke-width="1.7" fill="none"/><path d="M1253.1 232V237" stroke="#888" stroke-width="1.100"/><path d="M1247.300 245.300V241.800C1247.300 239 1250.500 237 1253.400 237C1256.300 237 1259.500 239 1259.500 241.800V245.300Z" fill="#fff" stroke="#8a8a8a" stroke-width="1.100"/><path d="M1248.800 243.800H1255.400V238.500" fill="none" stroke="#777" stroke-width="1.700"/><path d="M13.8 361.4H16.6" stroke="#888" stroke-width="1.1"/><path d="M13.8 378.7H16.6" stroke="#888" stroke-width="1.1"/><path d="M13.8 396.0H16.6" stroke="#888" stroke-width="1.1"/><path d="M11.4 413.2H18.6" stroke="#777" stroke-width="1.1"/><path d="M13.8 430.5H16.6" stroke="#888" stroke-width="1.1"/><path d="M13.8 447.8H16.6" stroke="#888" stroke-width="1.1"/><path d="M13.8 465.1H16.6" stroke="#888" stroke-width="1.1"/><path d="M11.4 482.4H18.6" stroke="#777" stroke-width="1.1"/><path d="M13.8 499.7H16.6" stroke="#888" stroke-width="1.1"/><path d="M13.8 517.0H16.6" stroke="#888" stroke-width="1.1"/><path d="M13.8 534.3H16.6" stroke="#888" stroke-width="1.1"/><path d="M11.4 551.6H18.6" stroke="#777" stroke-width="1.1"/><path d="M13.8 568.8H16.6" stroke="#888" stroke-width="1.1"/><path d="M13.8 586.1H16.6" stroke="#888" stroke-width="1.1"/><path d="M13.8 603.4H16.6" stroke="#888" stroke-width="1.1"/><path d="M11.4 620.7H18.6" stroke="#777" stroke-width="1.1"/><path d="M13.8 638.0H16.6" stroke="#888" stroke-width="1.1"/><path d="M13.8 655.3H16.6" stroke="#888" stroke-width="1.1"/><path d="M13.8 672.6H16.6" stroke="#888" stroke-width="1.1"/><path d="M11.4 689.9H18.6" stroke="#777" stroke-width="1.1"/><path d="M13.8 707.1H16.6" stroke="#888" stroke-width="1.1"/><path d="M13.8 724.4H16.6" stroke="#888" stroke-width="1.1"/><path d="M13.8 741.7H16.6" stroke="#888" stroke-width="1.1"/><path d="M11.4 759.0H18.6" stroke="#777" stroke-width="1.1"/><path d="M13.8 776.3H16.6" stroke="#888" stroke-width="1.1"/><path d="M13.8 793.6H16.6" stroke="#888" stroke-width="1.1"/></svg>
<div class="a" style="left:216px;top:275px;width:1176px;height:538px;background:#fff;border:1px solid #d8d8d3;border-bottom:none;"></div>
<div class="a" style="left:354.1px;top:344.3px;width:97.69999999999999px;height:25.30000000000001px;background:#C7C7C7;"></div>
<span class="t" style="left:354.36px;top:348.00px;font-size:18.9px;letter-spacing:0.286px;color:#111;">[Type here]</span>
<svg class="a" style="left:0;top:0" width="1600" height="900"><path d="M217 412.7H1391" stroke="#9c9c9c" stroke-width="1.1" stroke-dasharray="3 3"/></svg>
<div class="a" style="left:225px;top:413.2px;width:56px;height:20.600000000000023px;background:#E4E4E4;border:1px solid #909090;"></div>
<span class="t" style="left:231.93px;top:414.00px;font-size:13px;letter-spacing:-0.293px;color:#4a4a4a;">Header</span>
<svg class="a" style="left:0;top:0" width="1600" height="900">
<defs><filter id="gsh" x="-30%" y="-30%" width="160%" height="160%"><feDropShadow dx="0" dy="1" stdDeviation="1.4" flood-color="#000" flood-opacity="0.28"/></filter></defs>
<path d="M1445.300 386.500A21.800 21.800 0 0 1 1445.300 430.100H1426.500A3 3 0 0 1 1423.500 427.100V408.300A21.800 21.800 0 0 1 1445.300 386.500Z" fill="#fff" filter="url(#gsh)"/>
<circle cx="1445.300" cy="408.300" r="17.400" fill="#10897A"/>
<path d="M1452.650 403.540A9.200 9.200 0 1 0 1451.300 416.250" fill="none" stroke="#E9FFFC" stroke-width="2.500" stroke-linecap="round"/>
<path d="M1448.300 411.700H1455.300L1454.600 417.800Z" fill="#E9FFFC" stroke="#E9FFFC" stroke-width="1.600" stroke-linejoin="round"/>
<g fill="#b8b8b8"><rect x="1426" y="421.400" width="1.700" height="1.500"/><rect x="1429" y="421.400" width="1.700" height="1.500"/><rect x="1426" y="423.900" width="1.700" height="1.500"/><rect x="1429" y="423.900" width="1.700" height="1.500"/><rect x="1426" y="426.400" width="1.700" height="1.500"/><rect x="1429" y="426.400" width="1.700" height="1.500"/></g>
</svg>
<div class="a" style="left:0px;top:813px;width:1600px;height:27.5px;background:#F4F4F2;"></div>
<span class="t" style="left:8.32px;top:818.00px;font-size:13.2px;letter-spacing:-0.365px;color:#444;">Page 1 of 1</span>
<span class="t" style="left:96.04px;top:818.00px;font-size:13.2px;letter-spacing:0.125px;color:#444;">2 words</span>
<span class="t" style="left:207.91px;top:818.00px;font-size:13.2px;letter-spacing:-0.299px;color:#444;">Text Predictions: On</span>
<span class="t" style="left:366.17px;top:818.00px;font-size:13.2px;letter-spacing:-0.189px;color:#444;">Accessibility: Good to go</span>
<span class="t" style="left:1182.92px;top:818.00px;font-size:13.2px;letter-spacing:-0.766px;color:#444;">Focus</span>
<span class="t" style="left:1557.20px;top:818.00px;font-size:13.2px;letter-spacing:-0.028px;color:#444;">115%</span>
<div class="a" style="left:1279.4px;top:813px;width:49.799999999999955px;height:27.5px;background:#DBDBDB;"></div>
<svg class="a" style="left:0;top:0" width="1600" height="900"><path d="M170.500 833.300H166.200V820.200H181.400V827" fill="none" stroke="#444" stroke-width="1.300" stroke-linejoin="round"/><path d="M173.700 820.500V830.800" stroke="#444" stroke-width="1.300"/><path d="M172.400 831.300L175.600 834.300L182.300 828.200" fill="none" stroke="#444" stroke-width="1.300" stroke-linecap="round" stroke-linejoin="round"/><circle cx="351.700" cy="820.400" r="1.800" fill="none" stroke="#444" stroke-width="1.200"/><path d="M344.700 822C347 824.300 349.300 825 351.700 825C354.100 825 356.400 824.300 358.700 822M349.200 824.800V829.500C349.200 832 348 833.800 346.300 834.300M354.200 824.800V828.300" fill="none" stroke="#444" stroke-width="1.300" stroke-linecap="round" stroke-linejoin="round"/><path d="M352.500 831.400L355.100 834.200L361.100 828.600" fill="none" stroke="#444" stroke-width="1.400" stroke-linecap="round" stroke-linejoin="round"/><path d="M1161.300 822V818.500H1164.800M1174.800 818.500H1178.300V822M1178.300 831.300V834.800H1174.800M1164.800 834.800H1161.300V831.300" fill="none" stroke="#444" stroke-width="1.300"/><path d="M1165.500 821H1171L1174.300 824.300V832.500H1165.500ZM1171 821V824.300H1174.300" fill="none" stroke="#444" stroke-width="1.300" stroke-linejoin="round"/><path d="M1245.700 819.200C1248.500 818.300 1251 818.500 1253.600 820.200C1256.200 818.500 1258.700 818.300 1261.500 819.200V832C1258.700 831.100 1256.200 831.300 1253.600 833C1251 831.300 1248.500 831.100 1245.700 832ZM1253.600 820.200V833" fill="none" stroke="#444" stroke-width="1.300" stroke-linejoin="round"/><path d="M1247.800 822.500H1251.500M1247.800 825.300H1251.500M1247.800 828.100H1251.500M1255.700 822.500H1259.400M1255.700 825.300H1259.400M1255.700 828.100H1259.400" stroke="#444" stroke-width="1"/><rect x="1297.200" y="819.500" width="12.800" height="15" fill="#fff" stroke="#444" stroke-width="1.300"/><path d="M1299.500 822.600H1307.700M1299.500 825.200H1307.700M1299.500 827.800H1307.700M1299.500 830.400H1307.700" stroke="#444" stroke-width="1.100"/><path d="M1353 833.500H1345.700V819.200H1360.300V824.500" fill="none" stroke="#444" stroke-width="1.300"/><path d="M1345.700 822.300H1360.300" stroke="#444" stroke-width="1.300"/><path d="M1348 825H1354M1348 827.600H1352.500M1348 830.200H1352" stroke="#444" stroke-width="1"/><circle cx="1357.800" cy="830.500" r="4.800" fill="#fff" stroke="#333" stroke-width="1.300"/><ellipse cx="1357.800" cy="830.500" rx="2" ry="4.800" fill="none" stroke="#333" stroke-width="1"/><path d="M1353 830.500H1362.600" stroke="#333" stroke-width="1"/><path d="M1386.500 826.700H1395" stroke="#555" stroke-width="1.200"/><path d="M1402.500 826.700H1525.800" stroke="#666" stroke-width="1.200"/><rect x="1463.600" y="819.200" width="6" height="14.200" fill="#666"/><path d="M1532.500 826.700H1541.700M1537.100 822.100V831.300" stroke="#555" stroke-width="1.200"/></svg>
<div class="a" style="left:0px;top:841px;width:1600px;height:59px;background:linear-gradient(90deg,#F6EAD2 0.00%,#F3EAD3 8.00%,#EAE9D6 10.60%,#DFE8DB 12.90%,#DAE8DE 18.75%,#DCE8DC 23.75%,#E6E8D4 26.25%,#F0E8CE 28.75%,#F2E8CD 32.50%,#EAE8D1 34.06%,#DCE7D9 35.94%,#D5E6DD 40.00%,#D8E6DB 44.38%,#E6E7D2 46.56%,#F1E8CC 48.44%,#F5E8C9 53.12%,#F3E8CA 62.50%,#E6E7D1 65.00%,#D8E6D9 67.50%,#D2E5DB 70.00%,#D6E6D9 73.12%,#E6E7D0 75.62%,#F1E8CB 78.12%,#F5E9CA 81.25%,#F4E9CB 90.62%,#ECE8CF 93.75%,#DCE6D7 96.88%,#CFE4DD 100.00%);"></div>
<div class="a" style="left:0px;top:840.3px;width:1600px;height:1.1000000000000227px;background:#c2c2bd;"></div>
<svg class="a" style="left:0;top:0" width="1600" height="900"><defs>
<linearGradient id="win" x1="0" y1="0" x2="1" y2="1"><stop offset="0" stop-color="#63CDF5"/><stop offset="1" stop-color="#0C78D4"/></linearGradient>
<linearGradient id="wea" x1="0" y1="0" x2="0.6" y2="1"><stop offset="0" stop-color="#F9B233"/><stop offset="1" stop-color="#EE6A1C"/></linearGradient>
<linearGradient id="sto" x1="0" y1="0" x2="0" y2="1"><stop offset="0" stop-color="#1C63B8"/><stop offset="1" stop-color="#164A95"/></linearGradient>
<linearGradient id="edg" x1="0" y1="1" x2="1" y2="0"><stop offset="0" stop-color="#0B53A0"/><stop offset="0.55" stop-color="#1C9CE0"/><stop offset="1" stop-color="#5BE39A"/></linearGradient>
<linearGradient id="tv" x1="0" y1="0" x2="0" y2="1"><stop offset="0" stop-color="#4a4a4a"/><stop offset="1" stop-color="#151515"/></linearGradient>
<linearGradient id="fol" x1="0" y1="0" x2="0" y2="1"><stop offset="0" stop-color="#FFD865"/><stop offset="1" stop-color="#F7B92D"/></linearGradient>
<linearGradient id="ope" x1="0" y1="0" x2="0" y2="1"><stop offset="0" stop-color="#FF2A3C"/><stop offset="1" stop-color="#C40D1E"/></linearGradient>
<clipPath id="cc1"><circle cx="503.600" cy="870" r="15"/></clipPath>
<clipPath id="cc2"><circle cx="833" cy="870" r="15"/></clipPath>
</defs><path d="M26.500 856.500H39.300V869.300H26.500ZM41.300 856.500H54.100V869.300H41.300ZM26.500 871.300H39.300V884.100H26.500ZM41.300 871.300H54.100V884.100H41.300Z" fill="url(#win)"/><rect x="75" y="851" width="121.500" height="38" rx="19" fill="#FCF9F1" stroke="#e4dfd0" stroke-width="0.800"/><circle cx="108.300" cy="867.400" r="6.300" fill="none" stroke="#222" stroke-width="1.700"/><path d="M112.900 872.200L117.300 876.800" stroke="#222" stroke-width="1.900" stroke-linecap="round"/><rect x="214.500" y="863.500" width="22" height="20.500" rx="2" fill="url(#tv)"/><rect x="222" y="856.200" width="22" height="20.500" rx="2" fill="#f4f4f2" fill-opacity="0.800" stroke="#e2e2e0" stroke-width="0.500"/><circle cx="284.200" cy="870.800" r="12.900" fill="url(#wea)"/><rect x="279.700" y="848.800" width="28.700" height="18.800" rx="9.400" fill="#FBF8F0"/><path d="M331.800 860V858.800a3.200 3.200 0 0 1 3.200-3.200h7.600a3.200 3.200 0 0 1 3.200 3.200V860" fill="none" stroke="#3AA5EE" stroke-width="1.800"/><path d="M324.200 858.900H353.100V881.800a3 3 0 0 1-3 3H327.200a3 3 0 0 1-3-3Z" fill="url(#sto)"/><rect x="332.300" y="865.800" width="5.700" height="5.700" fill="#F25022"/><rect x="339.300" y="865.800" width="5.700" height="5.700" fill="#7FBA00"/><rect x="332.300" y="872.700" width="5.700" height="5.700" fill="#00A4EF"/><rect x="339.300" y="872.700" width="5.700" height="5.700" fill="#FFB900"/><rect x="381" y="856.800" width="26.200" height="26.200" rx="1.200" fill="#3d3b3b"/><path d="M394 870H407.200L394 883Z" fill="#F9D616"/><path d="M407.200 870V883H394Z" fill="#333131"/><defs><linearGradient id="edg1" x1="0.1" y1="0" x2="0.8" y2="1"><stop offset="0" stop-color="#3FC4EE"/><stop offset="0.5" stop-color="#1E8FDC"/><stop offset="1" stop-color="#0D5FB3"/></linearGradient><radialGradient id="edg2" cx="461.500" cy="864" r="15" gradientUnits="userSpaceOnUse"><stop offset="0" stop-color="#6FEA74"/><stop offset="0.450" stop-color="#4FD58B" stop-opacity="0.900"/><stop offset="1" stop-color="#35C1E6" stop-opacity="0"/></radialGradient><clipPath id="ecl"><circle cx="449" cy="870" r="15"/></clipPath></defs><circle cx="449" cy="870" r="15" fill="url(#edg1)"/><g clip-path="url(#ecl)"><rect x="434" y="855" width="30" height="30" fill="url(#edg2)"/><path d="M434.500 868C438 861.500 445 861 447.300 866.500C446 872.500 449.500 877.800 456 879C459.500 879.600 462 878.800 464 877L466 884L449 887L436 880Z" fill="#0C56A3" fill-opacity="0.800"/></g><path d="M449.200 866A3.400 3.400 0 0 0 446.200 871C447 875 451 877.500 455.500 877.500C459.500 877.500 462.500 876.200 464.600 874.200C463.500 873.600 460 874.400 456.500 873.600C453 872.800 452 871 452.400 869.300A3.300 3.300 0 0 0 449.200 866Z" fill="#EDE8D0"/><g clip-path="url(#cc1)"><rect x="488.6" y="855" width="30" height="30" fill="#319F4C"/><path d="M497.54 873.5L482.6 847.6L482.6 840L533.6 840L533.6 863L503.6 863Z" fill="#E33E30"/><path d="M503.6 863L533.6 863L533.6 900L494.66 899.5L509.66 873.5Z" fill="#FABF2C"/></g><circle cx="503.6" cy="870" r="7" fill="#fff"/><circle cx="503.6" cy="870" r="5.600" fill="#4081EE"/><circle cx="559" cy="870" r="14.500" fill="#1ED760"/><path d="M550.500 864.800c6-1.800 12.500-1.200 17.500 1.700" fill="none" stroke="#111" stroke-width="2.600" stroke-linecap="round"/><path d="M551.500 870c5-1.400 10.200-0.800 14.500 1.600" fill="none" stroke="#111" stroke-width="2.200" stroke-linecap="round"/><path d="M552.500 874.800c4-1.100 8-0.600 11.500 1.400" fill="none" stroke="#111" stroke-width="1.900" stroke-linecap="round"/><path d="M599.300 859a2 2 0 0 1 2-2h7l3 3h16.500a2 2 0 0 1 2 2v19.500a2 2 0 0 1-2 2H601.300a2 2 0 0 1-2-2Z" fill="#E9A524"/><path d="M599.300 864a2 2 0 0 1 2-2H627.800a2 2 0 0 1 2 2V881.500a2 2 0 0 1-2 2H601.300a2 2 0 0 1-2-2Z" fill="url(#fol)"/><path d="M605 883.500V878a2.500 2.500 0 0 1 2.500-2.500H621.500a2.500 2.500 0 0 1 2.500 2.500V883.500Z" fill="#2B8BDB"/><rect x="609.500" y="878.200" width="10" height="2.200" rx="1" fill="#1766B0"/><path fill-rule="evenodd" d="M654.800 869.700a14.500 14.500 0 1 0 29 0a14.500 14.500 0 1 0-29 0ZM662.800 869.700a6.500 10.200 0 1 0 13 0a6.500 10.200 0 1 0-13 0Z" fill="url(#ope)"/><circle cx="735.800" cy="863.300" r="3.400" fill="#5059C9"/><path d="M731 868H740V875.500a4.500 4.500 0 0 1-9 0Z" fill="#5059C9"/><circle cx="726.400" cy="860.200" r="4.700" fill="#7B83EB"/><path d="M718 866.500H734.500V877a8.200 6.500 0 0 1-16.500 0Z" fill="#7B83EB"/><rect x="709.500" y="862" width="16" height="16" rx="1.600" fill="#4B53BC"/><path d="M713.300 866.300H721.700M717.500 866.300V874.500" stroke="#fff" stroke-width="2" fill="none"/><circle cx="738.200" cy="861.700" r="6.600" fill="#fff" fill-opacity="0.850"/><circle cx="738.200" cy="861.700" r="5.500" fill="#7CBB2A"/><path d="M735.500 861.900L737.500 863.900L741 859.700" fill="none" stroke="#fff" stroke-width="1.500" stroke-linecap="round" stroke-linejoin="round"/><rect x="756" y="846.800" width="46.500" height="46.700" rx="5" fill="#fff" fill-opacity="0.450" stroke="#fff" stroke-opacity="0.600" stroke-width="0.800"/><path d="M772.500 857.500H791a2 2 0 0 1 2 2V864.500H770.500V859.500a2 2 0 0 1 2-2Z" fill="#41A5EE"/><rect x="770.500" y="864.500" width="22.500" height="6.800" fill="#2B7CD3"/><rect x="770.500" y="871.300" width="22.500" height="6.800" fill="#185ABD"/><path d="M770.500 878.100H793V883a2 2 0 0 1-2 2H772.500a2 2 0 0 1-2-2Z" fill="#103F91"/><rect x="764" y="863.200" width="15.800" height="15.800" rx="1.600" fill="#185ABD"/><text x="771.900" y="875.300" font-family="Liberation Sans,sans-serif" font-weight="bold" font-size="11" fill="#fff" text-anchor="middle">W</text><rect x="770" y="890.300" width="20" height="3.200" rx="1.600" fill="#8BA9EA"/><g clip-path="url(#cc2)"><rect x="818" y="855" width="30" height="30" fill="#319F4C"/><path d="M826.94 873.5L812 847.6L812 840L863 840L863 863L833 863Z" fill="#E33E30"/><path d="M833 863L863 863L863 900L824.06 899.5L839.06 873.5Z" fill="#FABF2C"/></g><circle cx="833" cy="870" r="7" fill="#fff"/><circle cx="833" cy="870" r="5.600" fill="#4081EE"/><circle cx="846.500" cy="859" r="9.500" fill="#5A463F"/><text x="846.500" y="863" font-family="Liberation Sans,sans-serif" font-size="11" fill="#d8d0cc" text-anchor="middle">S</text><rect x="557" y="890.500" width="6.500" height="3" rx="1.500" fill="#7d7d78"/><rect x="721.5" y="890.500" width="6.500" height="3" rx="1.500" fill="#7d7d78"/><rect x="831.8" y="890.500" width="6.500" height="3" rx="1.500" fill="#7d7d78"/><path d="M1291 872.600L1297.300 866.300L1303.600 872.600" fill="none" stroke="#222" stroke-width="1.700" stroke-linecap="round" stroke-linejoin="round"/><path d="M1332.500 877.500a4.600 4.600 0 0 1-0.600-9.100a6.300 6.300 0 0 1 11.500-1.600a5.400 5.400 0 0 1 1.500 10.700Z" fill="#1A84DC"/><path d="M1336 877.500l9-8.800a4.500 4.500 0 0 1-0.200 8.800Z" fill="#0F5FB5"/><path d="M1368.300 868.200a13 13 0 0 1 18.400 0M1371.200 871.400a9 9 0 0 1 12.600 0M1374.200 874.300a4.700 4.700 0 0 1 6.600 0" fill="none" stroke="#222" stroke-width="1.600" stroke-linecap="round"/><circle cx="1377.500" cy="876.800" r="1.300" fill="#222"/><path d="M1398 867.500H1401.500L1406 863.300V877.700L1401.500 873.500H1398Z" fill="none" stroke="#222" stroke-width="1.400" stroke-linejoin="round"/><path d="M1408.800 867.300a4.500 4.500 0 0 1 0 6.400" fill="none" stroke="#222" stroke-width="1.300" stroke-linecap="round"/><path d="M1411.500 864.800a8 8 0 0 1 0 11.400" fill="none" stroke="#8d8a80" stroke-width="1.200" stroke-linecap="round"/><path d="M1414.300 862.500a11.500 11.500 0 0 1 0 16" fill="none" stroke="#c5c0b3" stroke-width="1.100" stroke-linecap="round"/><rect x="1427.800" y="864.800" width="17.500" height="11" rx="2.600" fill="none" stroke="#222" stroke-width="1.500"/><rect x="1430.300" y="867.300" width="12.500" height="6" rx="1" fill="#222"/><path d="M1446.800 868.500V872" stroke="#222" stroke-width="2" stroke-linecap="round"/><circle cx="1565" cy="870" r="9.700" fill="#8DB1F3"/></svg>
<span class="t" style="left:125.28px;top:861.00px;font-size:16px;letter-spacing:-1.091px;color:#222;">Search</span>
<span class="t" style="left:285.21px;top:849.00px;font-size:12.8px;letter-spacing:0.347px;color:#222;">33°</span>
<span class="t" style="left:1491.74px;top:850.00px;font-size:15.2px;letter-spacing:-0.277px;color:#1d1d1d;">1:36 PM</span>
<span class="t" style="left:1468.74px;top:870.00px;font-size:15.2px;letter-spacing:0.144px;color:#1d1d1d;">10/25/2023</span>
<span class="t" style="left:1563.06px;top:860.00px;font-size:11px;letter-spacing:-1.859px;color:#fff;">1</span>
</div></body></html>
